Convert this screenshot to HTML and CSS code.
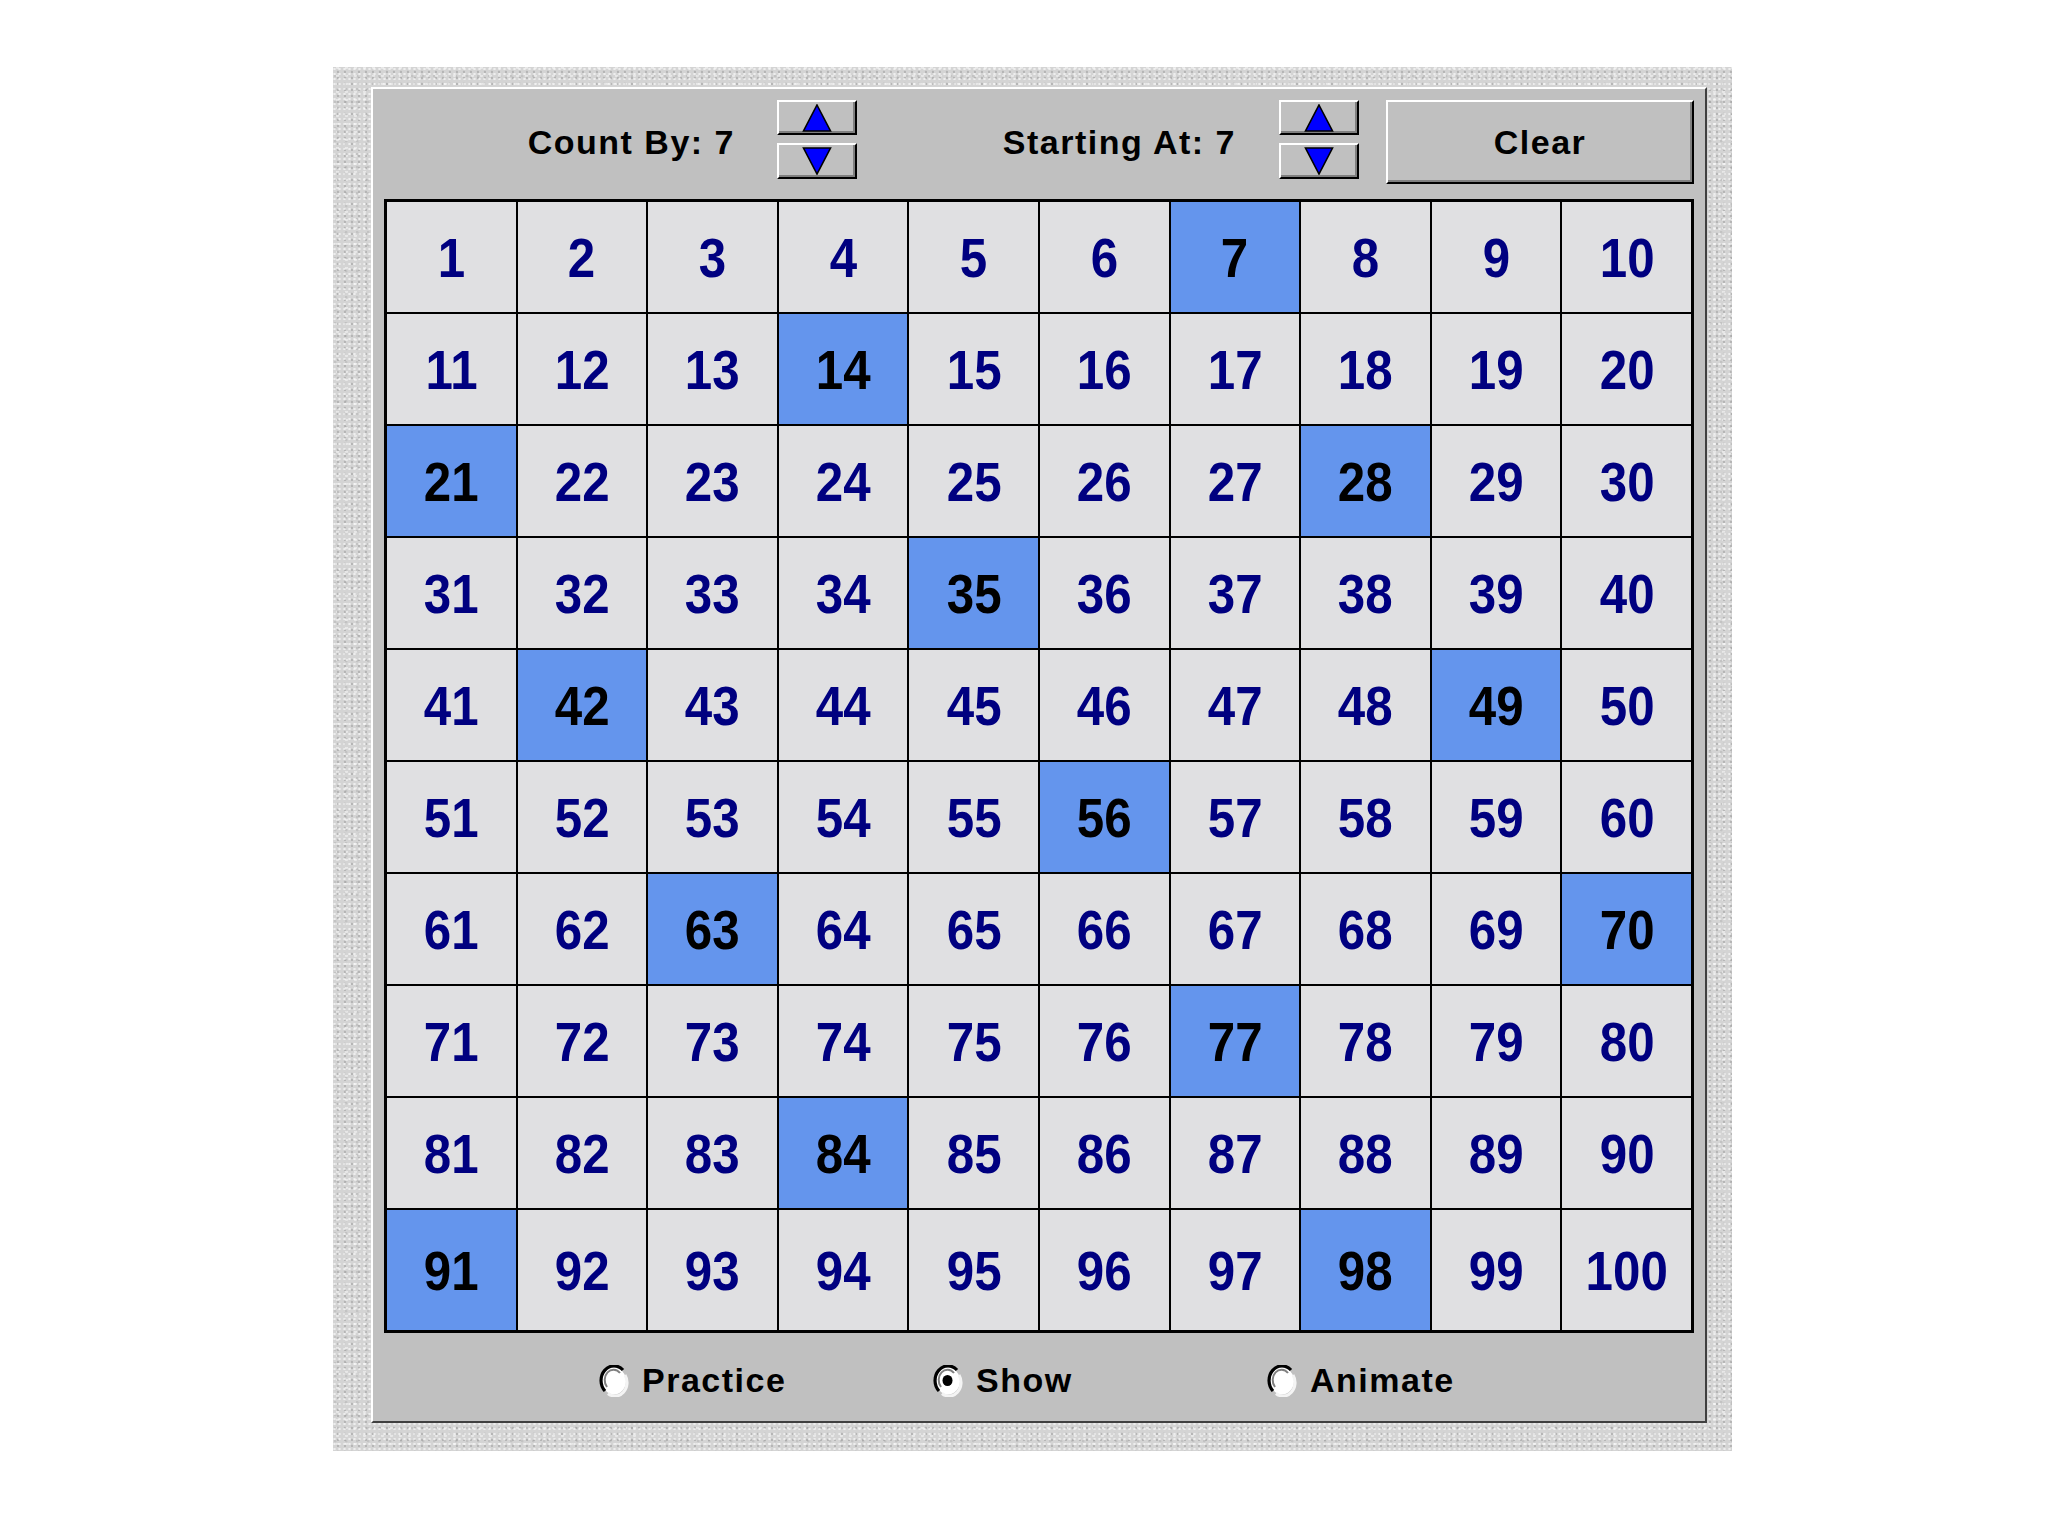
FILE: index.html
```html
<!DOCTYPE html>
<html>
<head>
<meta charset="utf-8">
<title>Hundred Chart</title>
<link rel="stylesheet" href="styles.css">
</head>
<body>
<div class="frame">
  <div class="panel">
    <div class="topbar">
      <div class="label label-count">Count By: 7</div>
      <div class="spinner spinner-count">
        <button class="btn spin up"><svg width="30" height="28" viewBox="0 0 30 28"><polygon points="15,1 28.5,27 1.5,27" fill="#0000ff" stroke="#000" stroke-width="1.6" stroke-linejoin="miter"/></svg></button>
        <button class="btn spin down"><svg width="30" height="28" viewBox="0 0 30 28"><polygon points="1.5,1 28.5,1 15,27" fill="#0000ff" stroke="#000" stroke-width="1.6" stroke-linejoin="miter"/></svg></button>
      </div>
      <div class="label label-start">Starting At: 7</div>
      <div class="spinner spinner-start">
        <button class="btn spin up"><svg width="30" height="28" viewBox="0 0 30 28"><polygon points="15,1 28.5,27 1.5,27" fill="#0000ff" stroke="#000" stroke-width="1.6" stroke-linejoin="miter"/></svg></button>
        <button class="btn spin down"><svg width="30" height="28" viewBox="0 0 30 28"><polygon points="1.5,1 28.5,1 15,27" fill="#0000ff" stroke="#000" stroke-width="1.6" stroke-linejoin="miter"/></svg></button>
      </div>
      <button class="btn clear">Clear</button>
    </div>
    <div class="grid" id="grid"></div>
    <div class="radios">
      <div class="radio">
        <svg class="radio-dot" width="30" height="32" viewBox="0 0 30 32"><ellipse cx="15" cy="16" rx="12" ry="13.5" fill="#fff"/><path d="M6 26 A12 13.5 0 0 1 24 5" fill="none" stroke="#000" stroke-width="3.2"/><path d="M8 22 A8.5 10 0 0 1 21 8" fill="none" stroke="#808080" stroke-width="2"/><path d="M26 10 A12 13.5 0 0 1 9 28.5" fill="none" stroke="#f4f4f4" stroke-width="3"/></svg>
        <span class="radio-label">Practice</span>
      </div>
      <div class="radio">
        <svg class="radio-dot" width="30" height="32" viewBox="0 0 30 32"><ellipse cx="15" cy="16" rx="12" ry="13.5" fill="#fff"/><path d="M6 26 A12 13.5 0 0 1 24 5" fill="none" stroke="#000" stroke-width="3.2"/><path d="M8 22 A8.5 10 0 0 1 21 8" fill="none" stroke="#808080" stroke-width="2"/><path d="M26 10 A12 13.5 0 0 1 9 28.5" fill="none" stroke="#f4f4f4" stroke-width="3"/><ellipse cx="14.5" cy="15.5" rx="5" ry="5.5" fill="#000"/></svg>
        <span class="radio-label">Show</span>
      </div>
      <div class="radio">
        <svg class="radio-dot" width="30" height="32" viewBox="0 0 30 32"><ellipse cx="15" cy="16" rx="12" ry="13.5" fill="#fff"/><path d="M6 26 A12 13.5 0 0 1 24 5" fill="none" stroke="#000" stroke-width="3.2"/><path d="M8 22 A8.5 10 0 0 1 21 8" fill="none" stroke="#808080" stroke-width="2"/><path d="M26 10 A12 13.5 0 0 1 9 28.5" fill="none" stroke="#f4f4f4" stroke-width="3"/></svg>
        <span class="radio-label">Animate</span>
      </div>
    </div>
  </div>
</div>
<script src="script.js"></script>
</body>
</html>
```
FILE: styles.css
```css
html, body {
  margin: 0;
  padding: 0;
  background: #ffffff;
}
body {
  width: 2048px;
  height: 1536px;
  font-family: "Liberation Sans", Arial, sans-serif;
}
.frame {
  box-sizing: border-box;
  margin-left: 333px;
  margin-top: 67px;
  width: 1399px;
  height: 1384px;
  padding: 20px 25px 28px 38px;
  background-color: #d4d4d4;
  background-image:
    radial-gradient(circle at 30% 40%, rgba(255,255,255,0.6) 0.9px, transparent 1.5px),
    radial-gradient(circle at 70% 80%, rgba(150,150,150,0.5) 0.9px, transparent 1.5px),
    radial-gradient(circle at 50% 10%, rgba(240,240,240,0.7) 1.1px, transparent 1.7px),
    radial-gradient(circle at 20% 70%, rgba(175,175,175,0.45) 1px, transparent 1.6px);
  background-size: 5px 5px, 7px 6px, 9px 8px, 11px 13px;
}
.panel {
  box-sizing: border-box;
  width: 1336px;
  height: 1336px;
  background: #c0c0c0;
  border-style: solid;
  border-width: 2px;
  border-color: #ffffff #404040 #404040 #ffffff;
  display: flex;
  flex-direction: column;
}
.topbar {
  display: flex;
  align-items: flex-start;
  padding-top: 11px;
  padding-left: 11px;
  height: 84px;
}
.label {
  height: 84px;
  line-height: 84px;
  font-size: 34px;
  font-weight: bold;
  letter-spacing: 1.5px;
  color: #000;
  text-align: right;
  white-space: nowrap;
}
.label-count {
  width: 351px;
}
.label-start {
  width: 379px;
}
.spinner {
  display: flex;
  flex-direction: column;
  gap: 8px;
  width: 80px;
  margin-left: 42px;
}
.spinner-start {
  margin-left: 43px;
}
.btn {
  box-sizing: border-box;
  background: #c0c0c0;
  border-style: solid;
  border-width: 2px;
  border-color: #ffffff #000000 #000000 #ffffff;
  box-shadow: inset -2px -2px 0 #808080;
  padding: 0;
  margin: 0;
  display: flex;
  align-items: center;
  justify-content: center;
  font-family: "Liberation Sans", Arial, sans-serif;
}
.spin {
  width: 80px;
  height: 35px;
}
.spin.down {
  height: 36px;
}
.spin svg {
  display: block;
}
.clear {
  margin-left: 27px;
  width: 308px;
  height: 84px;
  font-size: 34px;
  font-weight: bold;
  letter-spacing: 1.5px;
  color: #000;
}
.grid {
  box-sizing: border-box;
  margin-top: 15px;
  margin-left: 11px;
  width: 1310px;
  height: 1134px;
  border: 3px solid #000;
  background: #000;
  display: grid;
  grid-template-columns: repeat(10, 1fr);
  grid-template-rows: repeat(9, 110px) 1fr;
  gap: 2px;
}
.cell {
  background: #e0e0e2;
  display: flex;
  align-items: center;
  justify-content: center;
  color: #000080;
  font-size: 56px;
  font-weight: bold;
}
.cell span {
  display: inline-block;
  transform: scaleX(0.88);
}
.cell.on {
  background: #6495ed;
  color: #000;
}
.radios {
  flex: 1;
  display: flex;
  align-items: center;
  padding-left: 226px;
  padding-top: 7px;
}
.radio {
  width: 334px;
  display: flex;
  align-items: center;
  gap: 13px;
}
.radio-dot {
  display: block;
  flex: none;
}
.radio-label {
  font-size: 34px;
  font-weight: bold;
  letter-spacing: 1.5px;
  color: #000;
}
```
FILE: script.js
```js
(function () {
  var grid = document.getElementById('grid');
  for (var i = 1; i <= 100; i++) {
    var c = document.createElement('div');
    c.className = 'cell' + (i % 7 === 0 ? ' on' : '');
    var s = document.createElement('span');
    s.textContent = i;
    c.appendChild(s);
    grid.appendChild(c);
  }
})();
```
